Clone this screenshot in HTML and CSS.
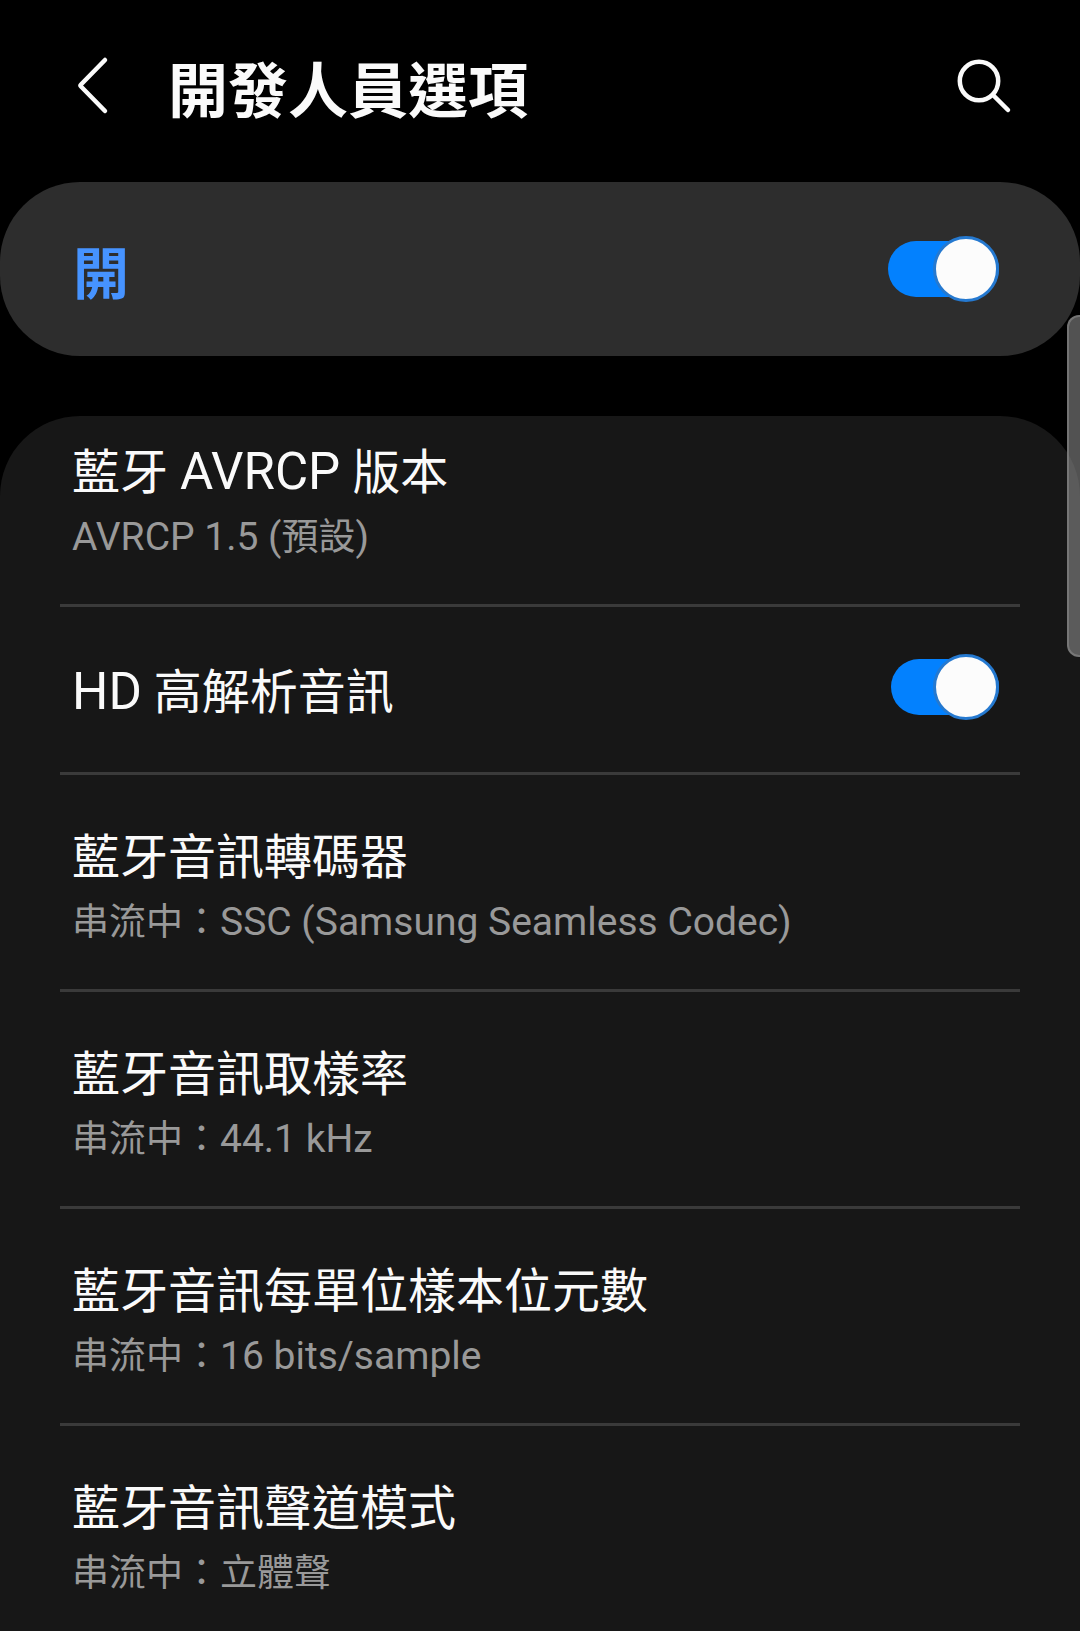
FILE: index.html
```
<!DOCTYPE html>
<html lang="zh-Hant">
<head>
    <meta charset="UTF-8">
    <meta name="viewport" content="width=device-width, initial-scale=1.0">
    <title>開發人員選項</title>
    <link rel="stylesheet" href="styles.css">
</head>
<body>
    <header class="header">
        <button class="icon-button" type="button" aria-label="返回">
            <svg width="36" height="60" viewBox="0 0 36 60" fill="none" stroke="#fafafa" stroke-width="4.500" stroke-linecap="round" stroke-linejoin="round">
                <path d="M31 5 7 29.500 Q6 30.500 7 31.500 L31 56"/>
            </svg>
        </button>
        <h1 class="title">開發人員選項</h1>
        <button class="icon-button" type="button" aria-label="搜尋">
            <svg width="60" height="60" viewBox="0 0 60 60" fill="none" stroke="#fafafa" stroke-width="4.500" stroke-linecap="round">
                <circle cx="27" cy="26" r="19.200"/>
                <path d="M41.500 40.500 56 55"/>
            </svg>
        </button>
    </header>

    <main>
        <div class="main-switch">
            <label class="main-label" for="developerMode">開</label>
            <input class="switch switch-wide" type="checkbox" id="developerMode" checked>
        </div>

        <ul class="settings">
            <li class="item">
                <h2 class="name">藍牙 <span class="latin">AVRCP</span> 版本</h2>
                <p class="summary"><span class="latin">AVRCP 1.5 (</span>預設<span class="latin">)</span></p>
            </li>
            <li class="item item-switch">
                <label class="name" for="hdAudio"><span class="latin">HD</span> 高解析音訊</label>
                <input class="switch" type="checkbox" id="hdAudio" checked>
            </li>
            <li class="item">
                <h2 class="name">藍牙音訊轉碼器</h2>
                <p class="summary">串流中：<span class="latin">SSC (Samsung Seamless Codec)</span></p>
            </li>
            <li class="item">
                <h2 class="name">藍牙音訊取樣率</h2>
                <p class="summary">串流中：<span class="latin">44.1 kHz</span></p>
            </li>
            <li class="item">
                <h2 class="name">藍牙音訊每單位樣本位元數</h2>
                <p class="summary">串流中：<span class="latin">16 bits/sample</span></p>
            </li>
            <li class="item">
                <h2 class="name">藍牙音訊聲道模式</h2>
                <p class="summary">串流中：立體聲</p>
            </li>
        </ul>
    </main>

    <div class="scroll-thumb"></div>
</body>
</html>
```
FILE: styles.css
```
* {
    box-sizing: border-box;
}
body {
    font-family: Roboto, "Noto Sans CJK TC", sans-serif;
    background-color: #000;
    color: #fafafa;
    margin: 0;
    position: relative;
}
.header {
    display: flex;
    align-items: center;
    padding: 38px 68px 50px 74px;
}
.icon-button {
    display: flex;
    padding: 0;
    border: none;
    background: none;
    cursor: pointer;
}
.title {
    flex: 1;
    margin: 0 0 0 58px;
    padding-top: 16px;
    font-size: 60px;
    line-height: 78px;
    font-weight: 700;
}
.main-switch {
    display: flex;
    align-items: center;
    justify-content: space-between;
    padding: 42px 81px 42px 73px;
    background-color: #2d2d2d;
    border-radius: 80px;
    margin-bottom: 60px;
}
.main-label {
    padding-top: 12px;
    color: #4693ff;
    font-size: 56px;
    line-height: 78px;
    font-weight: 700;
}
/* track is the input itself, the knob is a bit taller than it */
.switch {
    appearance: none;
    display: flex;
    align-items: center;
    justify-content: flex-end;
    flex: none;
    width: 108px;
    height: 56px;
    margin: 0;
    border-radius: 33px;
    background-color: #0381fe;
    cursor: pointer;
}
.switch-wide {
    width: 111px;
}
.switch::after {
    content: "";
    flex: none;
    width: 60px;
    height: 60px;
    border: 3px solid #2579d0;
    border-radius: 50%;
    background-color: #fcfcfc;
}
.switch:not(:checked) {
    justify-content: flex-start;
    background-color: #5c5c5c;
}
.settings {
    list-style: none;
    margin: 0;
    padding: 0 60px;
    background-color: #171717;
    border-radius: 80px 80px 0 0;
}
.item {
    padding: 47px 12px 37px;
    border-bottom: 3px solid #3a3a3a;
}
.item:first-child {
    padding-top: 21px;
}
.item:last-child {
    padding-bottom: 28px;
    border-bottom: none;
}
.item-switch {
    display: flex;
    align-items: center;
    justify-content: space-between;
    padding: 38px 21px 43px 12px;
}
.name {
    margin: 0;
    font-size: 48px;
    line-height: 72px;
    font-weight: 400;
}
.item-switch .name {
    padding-top: 12px;
}
.summary {
    margin: 0;
    color: #999;
    font-size: 37px;
    line-height: 58px;
}
/* Roboto looks small beside the CJK glyphs */
.latin {
    line-height: 1;
}
.name .latin {
    font-size: 51px;
}
.summary .latin {
    font-size: 39px;
}
.scroll-thumb {
    position: absolute;
    top: 315px;
    right: 0;
    width: 13px;
    height: 342px;
    border: 2px solid rgba(140, 140, 140, 0.6);
    border-right: none;
    border-radius: 12px 0 0 12px;
    background-color: rgba(136, 136, 136, 0.6);
}
```
